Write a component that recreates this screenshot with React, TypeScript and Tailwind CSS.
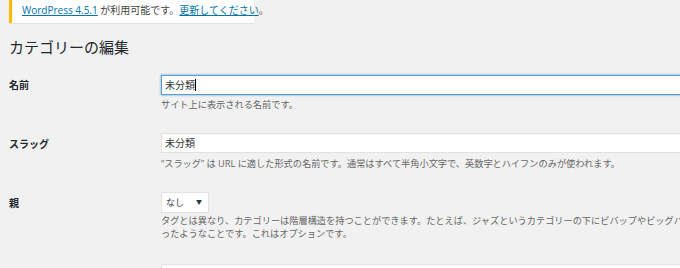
import React from "react";

export default function App() {
  const font = "font-['Open_Sans','Noto_Sans_CJK_JP',sans-serif]";
  return (
    <div className={`w-[680px] h-[268px] overflow-hidden bg-[#f1f1f1] text-[#23282d] ${font}`}>
      {/* notice */}
      <div className="ml-[9px] w-[245px] h-[23px] bg-white border-l-[3px] border-[#ffb900] shadow-[0_1px_1px_rgba(0,0,0,0.06)] pl-[10px] pt-[3px]">
        <p className="text-[10px] leading-[14px] whitespace-nowrap text-[#444]">
          <a className="text-[#0073aa] underline">WordPress 4.5.1</a> が利用可能です。
          <a className="text-[#0073aa] underline">更新してください</a>。
        </p>
      </div>

      <h1 className="ml-[9px] mt-[14px] text-[15px] leading-[20px] font-normal text-[#23282d]">
        カテゴリーの編集
      </h1>

      <div className="ml-[9px] mt-[18px] flex flex-col">
        {/* name */}
        <div className="grid grid-cols-[152px_1fr]">
          <div className="pt-[3px] text-[10px] leading-[14px] font-bold">名前</div>
          <div>
            <div className="w-[600px] h-[20px] bg-white border border-[#5b9dd9] shadow-[0_0_2px_rgba(30,140,190,0.8)] flex items-center pl-[3px] text-[10px] text-[#32373c]">
              未分類<span className="w-px h-[12px] bg-black" />
            </div>
            <p className="mt-[3px] text-[9.2px] leading-[13px] text-[#666] whitespace-nowrap">
              サイト上に表示される名前です。
            </p>
          </div>
        </div>

        {/* slug */}
        <div className="mt-[22px] grid grid-cols-[152px_1fr]">
          <div className="pt-[4px] text-[10px] leading-[14px] font-bold">スラッグ</div>
          <div>
            <div className="w-[600px] h-[20px] bg-white border border-[#e2e2e2] shadow-[inset_0_1px_2px_rgba(0,0,0,0.04)] flex items-center pl-[3px] text-[10px] text-[#32373c]">
              未分類
            </div>
            <p className="mt-[4px] text-[9.2px] leading-[13px] text-[#666] whitespace-nowrap">
              “スラッグ” は URL に適した形式の名前です。通常はすべて半角小文字で、英数字とハイフンのみが使われます。
            </p>
          </div>
        </div>

        {/* parent */}
        <div className="mt-[22px] grid grid-cols-[152px_1fr]">
          <div className="pt-[4px] text-[10px] leading-[14px] font-bold">親</div>
          <div>
            <div className="w-[48px] h-[21px] bg-white border border-[#e2e2e2] flex items-center justify-between pl-[4px] pr-[6px] text-[9px] text-[#32373c]">
              <span>なし</span>
              <span className="text-[6px]">▼</span>
            </div>
            <p className="mt-[1px] text-[9.2px] leading-[13px] text-[#666] whitespace-nowrap">
              <span className="block">タグとは異なり、カテゴリーは階層構造を持つことができます。たとえば、ジャズというカテゴリーの下にビバップやビッグバンドとい</span>
              <span className="block">ったようなことです。これはオプションです。</span>
            </p>
          </div>
        </div>

        {/* next */}
        <div className="mt-[24px] grid grid-cols-[152px_1fr]">
          <div />
          <div className="w-[600px] h-[20px] bg-white border border-[#e2e2e2]" />
        </div>
      </div>
    </div>
  );
}
